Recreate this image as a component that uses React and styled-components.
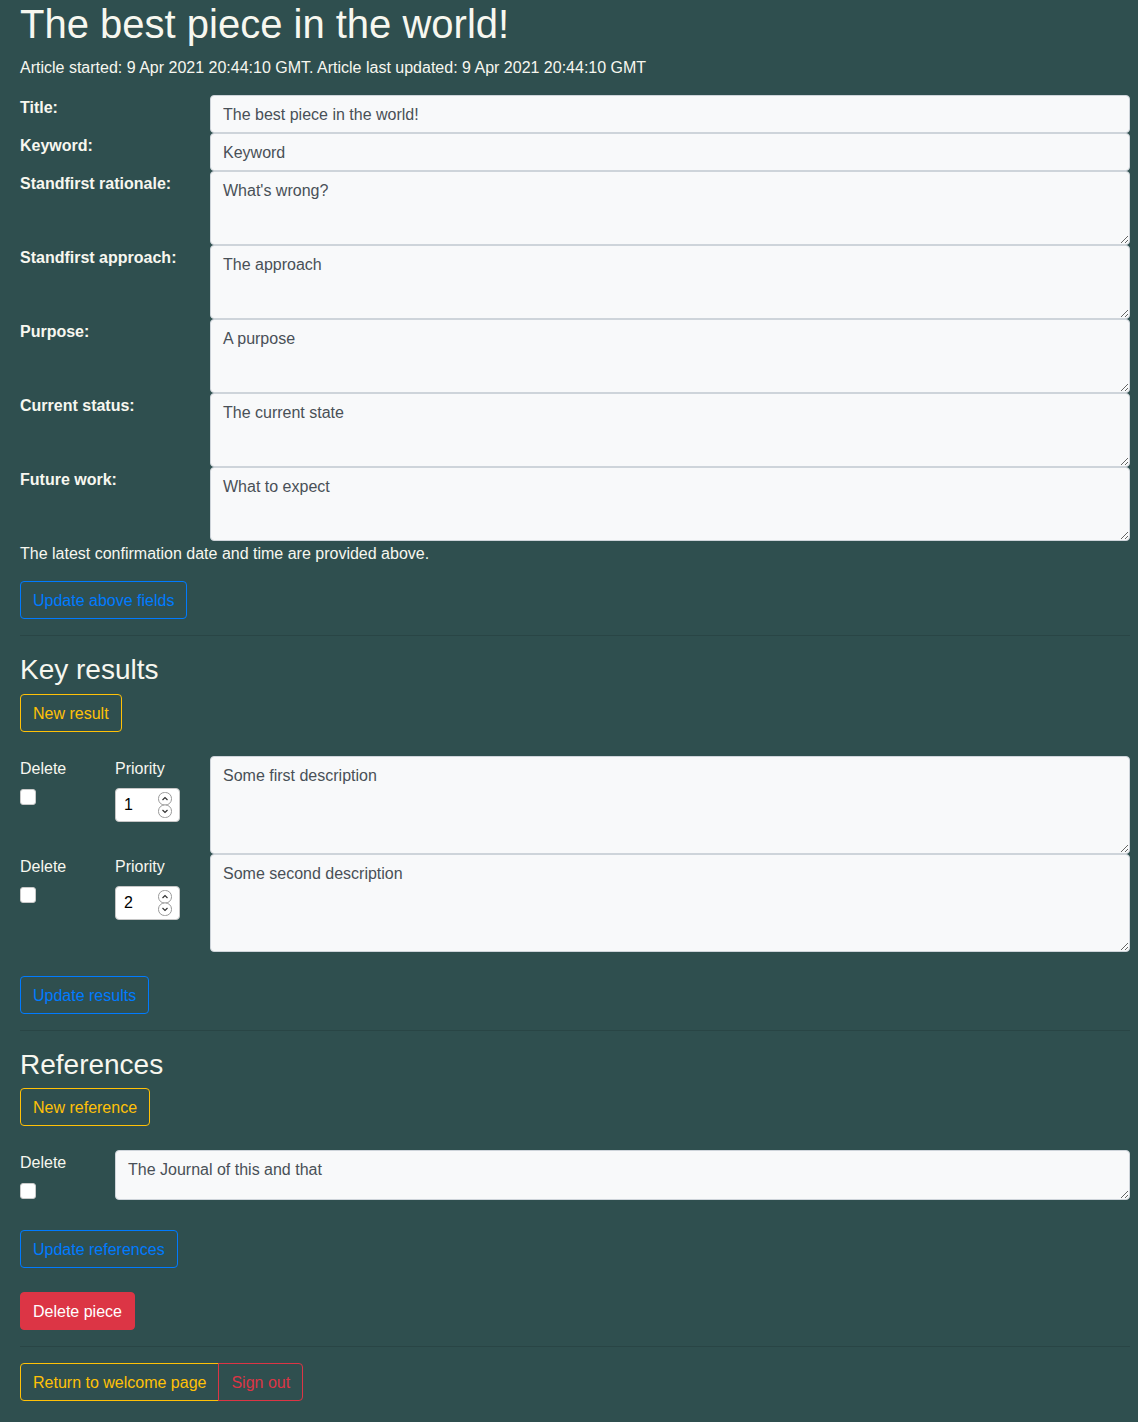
import React from "react";
import styled, { createGlobalStyle, css } from "styled-components";

const FONT = `"Liberation Sans", Arial, "Helvetica Neue", sans-serif`;

const GlobalStyle = createGlobalStyle`
  html, body { margin: 0; padding: 0; background: #2f4f4f; }
  body {
    font-family: ${FONT};
    font-size: 16px;
    line-height: 1.5;
    color: #f7f7ef;
  }
  * { box-sizing: border-box; }
`;

const Page = styled.main`
  padding: 0 8px 40px 20px;
`;

const Title = styled.h1`
  margin: 0 0 7px;
  font-size: 40px;
  font-weight: 400;
  line-height: 1.2;
`;

const Text = styled.p`
  margin: 0 0 15px;
  padding-top: 1px;
`;

const FieldGrid = styled.div`
  display: grid;
  grid-template-columns: 190px 1fr;
`;

const FieldLabel = styled.label`
  font-weight: 700;
  line-height: 24px;
  padding-top: 1px;
`;

const controlBase = css`
  display: block;
  width: 100%;
  font-family: ${FONT};
  font-size: 16px;
  line-height: 24px;
  color: #495057;
  background: #f8f9fa;
  border: 1px solid #ced4da;
  border-radius: 4px;
  padding: 7px 12px 5px;
  margin: 0;
  outline: none;
`;

const TextInput = styled.input`
  ${controlBase};
  height: 38px;
`;

const TextArea = styled.textarea`
  ${controlBase};
  height: ${(p) => p.$h || 74}px;
  resize: vertical;
`;

const Button = styled.button`
  display: inline-block;
  font-family: ${FONT};
  font-size: 16px;
  line-height: 24px;
  padding: 7px 12px 5px;
  border: 1px solid ${(p) => p.$color};
  border-radius: 4px;
  background: ${(p) => (p.$solid ? p.$color : "transparent")};
  color: ${(p) => (p.$solid ? "#ffffff" : p.$color)};
  cursor: pointer;
`;

const ButtonBlock = styled.div`
  margin: ${(p) => p.$m || "0"};
`;

const Rule = styled.hr`
  border: 0;
  border-top: 1px solid rgba(0, 0, 0, 0.12);
  margin: 16px 0;
`;

const SectionTitle = styled.h3`
  margin: 0 0 7px;
  padding-top: 1px;
  font-size: 28px;
  font-weight: 400;
  line-height: 1.2;
`;

const ResultRow = styled.div`
  display: grid;
  grid-template-columns: ${(p) => p.$cols};
  align-items: start;
`;

const Cell = styled.div`
  display: flex;
  flex-direction: column;
  align-items: flex-start;
`;

const SmallLabel = styled.label`
  line-height: 24px;
  padding-top: 1px;
  margin-bottom: 7px;
`;

const Check = styled.input.attrs({ type: "checkbox" })`
  appearance: none;
  -webkit-appearance: none;
  width: 16px;
  height: 16px;
  margin: 1px 0 0;
  background: #ffffff;
  border: 1px solid #c9c9c9;
  border-radius: 3px;
`;

const NumberBox = styled.div`
  display: flex;
  align-items: center;
  width: 65px;
  height: 34px;
  background: #ffffff;
  border: 1px solid #c6c6c6;
  border-radius: 4px;
  padding: 0 7px 0 8px;
`;

const NumberValue = styled.input`
  flex: 1;
  min-width: 0;
  border: 0;
  outline: none;
  background: transparent;
  font-family: ${FONT};
  font-size: 16px;
  color: #000;
  padding: 0;
`;

const Spinner = () => (
  <svg width="14" height="26" viewBox="0 0 14 26" aria-hidden="true">
    <rect x="0.5" y="0.5" width="13" height="12.5" rx="6" fill="#fff" stroke="#9a9a9a" />
    <rect x="0.5" y="13" width="13" height="12.5" rx="6" fill="#fff" stroke="#9a9a9a" />
    <path d="M4.5 8 L7 5.5 L9.5 8" fill="none" stroke="#333" strokeWidth="1.2" />
    <path d="M4.5 18 L7 20.5 L9.5 18" fill="none" stroke="#333" strokeWidth="1.2" />
  </svg>
);

const Group = styled.div`
  display: inline-flex;
  & > button:first-child { border-top-right-radius: 0; border-bottom-right-radius: 0; }
  & > button:last-child { border-top-left-radius: 0; border-bottom-left-radius: 0; margin-left: -1px; }
`;

const BLUE = "#007bff";
const YELLOW = "#ffc107";
const RED = "#dc3545";

const fields = [
  { label: "Title:", value: "The best piece in the world!", input: true },
  { label: "Keyword:", value: "Keyword", input: true },
  { label: "Standfirst rationale:", value: "What's wrong?" },
  { label: "Standfirst approach:", value: "The approach" },
  { label: "Purpose:", value: "A purpose" },
  { label: "Current status:", value: "The current state" },
  { label: "Future work:", value: "What to expect" },
];

const results = [
  { priority: 1, text: "Some first description" },
  { priority: 2, text: "Some second description" },
];

export default function App() {
  return (
    <>
      <GlobalStyle />
      <Page>
        <Title>The best piece in the world!</Title>
        <Text>
          Article started: 9 Apr 2021 20:44:10 GMT. Article last updated: 9 Apr 2021 20:44:10 GMT
        </Text>

        <FieldGrid>
          {fields.map((f) => (
            <React.Fragment key={f.label}>
              <FieldLabel>{f.label}</FieldLabel>
              {f.input ? (
                <TextInput defaultValue={f.value} />
              ) : (
                <TextArea defaultValue={f.value} />
              )}
            </React.Fragment>
          ))}
        </FieldGrid>
        <Text>The latest confirmation date and time are provided above.</Text>
        <Button $color={BLUE}>Update above fields</Button>

        <Rule />
        <SectionTitle>Key results</SectionTitle>
        <ButtonBlock $m="0 0 24px">
          <Button $color={YELLOW}>New result</Button>
        </ButtonBlock>
        {results.map((r) => (
          <ResultRow key={r.priority} $cols="95px 95px 1fr">
            <Cell>
              <SmallLabel>Delete</SmallLabel>
              <Check />
            </Cell>
            <Cell>
              <SmallLabel>Priority</SmallLabel>
              <NumberBox>
                <NumberValue defaultValue={r.priority} />
                <Spinner />
              </NumberBox>
            </Cell>
            <TextArea $h={98} defaultValue={r.text} />
          </ResultRow>
        ))}
        <ButtonBlock $m="24px 0 0">
          <Button $color={BLUE}>Update results</Button>
        </ButtonBlock>

        <Rule />
        <SectionTitle>References</SectionTitle>
        <ButtonBlock $m="0 0 24px">
          <Button $color={YELLOW}>New reference</Button>
        </ButtonBlock>
        <ResultRow $cols="95px 1fr">
          <Cell>
            <SmallLabel>Delete</SmallLabel>
            <Check />
          </Cell>
          <TextArea $h={50} defaultValue="The Journal of this and that" />
        </ResultRow>
        <ButtonBlock $m="30px 0 0">
          <Button $color={BLUE}>Update references</Button>
        </ButtonBlock>
        <ButtonBlock $m="24px 0 0">
          <Button $color={RED} $solid>
            Delete piece
          </Button>
        </ButtonBlock>

        <Rule />
        <Group>
          <Button $color={YELLOW}>Return to welcome page</Button>
          <Button $color={RED}>Sign out</Button>
        </Group>
      </Page>
    </>
  );
}
